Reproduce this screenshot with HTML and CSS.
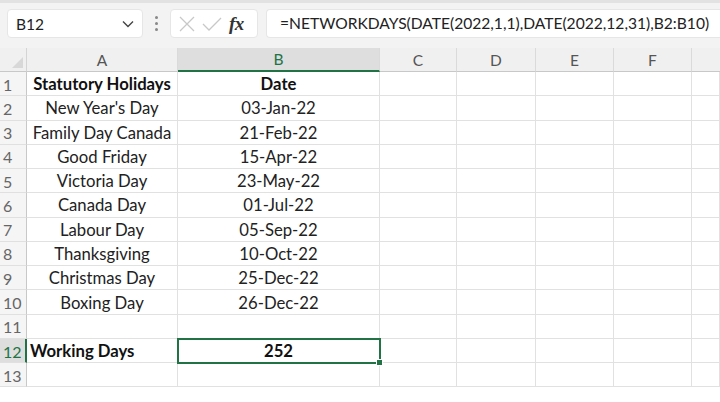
FILE: index.html
```html
<!DOCTYPE html>
<html>
<head>
<meta charset="utf-8">
<link rel="stylesheet" href="styles.css">
</head>
<body>
<div class="app">
  <div class="toolbar">
    <div class="namebox"><span class="ref">B12</span>
      <svg class="chev" width="12" height="8" viewBox="0 0 12 8"><path d="M1 1.5 L6 6.5 L11 1.5" fill="none" stroke="#444" stroke-width="1.4"/></svg>
    </div>
    <div class="vdots"><i></i><i></i><i></i></div>
    <div class="fnbox">
      <svg width="18" height="18" viewBox="0 0 18 18"><path d="M2 2 L16 16 M16 2 L2 16" stroke="#c8c8c8" stroke-width="1.3" fill="none"/></svg>
      <svg width="20" height="16" viewBox="0 0 20 16"><path d="M1 8 L7 14 L19 2" stroke="#c8c8c8" stroke-width="1.3" fill="none"/></svg>
      <span class="fx">fx</span>
    </div>
    <div class="formula">=NETWORKDAYS(DATE(2022,1,1),DATE(2022,12,31),B2:B10)</div>
  </div>
  <div class="grid">
    <div class="corner"><span class="tri"></span></div>
    <div class="ch">A</div><div class="ch sel">B</div><div class="ch">C</div><div class="ch">D</div><div class="ch">E</div><div class="ch">F</div><div class="ch last"></div>

    <div class="rh">1</div><div class="c b">Statutory Holidays</div><div class="c b">Date</div><div class="c"></div><div class="c"></div><div class="c"></div><div class="c"></div><div class="c"></div>
    <div class="rh">2</div><div class="c">New Year's Day</div><div class="c">03-Jan-22</div><div class="c"></div><div class="c"></div><div class="c"></div><div class="c"></div><div class="c"></div>
    <div class="rh">3</div><div class="c">Family Day Canada</div><div class="c">21-Feb-22</div><div class="c"></div><div class="c"></div><div class="c"></div><div class="c"></div><div class="c"></div>
    <div class="rh">4</div><div class="c">Good Friday</div><div class="c">15-Apr-22</div><div class="c"></div><div class="c"></div><div class="c"></div><div class="c"></div><div class="c"></div>
    <div class="rh">5</div><div class="c">Victoria Day</div><div class="c">23-May-22</div><div class="c"></div><div class="c"></div><div class="c"></div><div class="c"></div><div class="c"></div>
    <div class="rh">6</div><div class="c">Canada Day</div><div class="c">01-Jul-22</div><div class="c"></div><div class="c"></div><div class="c"></div><div class="c"></div><div class="c"></div>
    <div class="rh">7</div><div class="c">Labour Day</div><div class="c">05-Sep-22</div><div class="c"></div><div class="c"></div><div class="c"></div><div class="c"></div><div class="c"></div>
    <div class="rh">8</div><div class="c">Thanksgiving</div><div class="c">10-Oct-22</div><div class="c"></div><div class="c"></div><div class="c"></div><div class="c"></div><div class="c"></div>
    <div class="rh">9</div><div class="c">Christmas Day</div><div class="c">25-Dec-22</div><div class="c"></div><div class="c"></div><div class="c"></div><div class="c"></div><div class="c"></div>
    <div class="rh">10</div><div class="c">Boxing Day</div><div class="c">26-Dec-22</div><div class="c"></div><div class="c"></div><div class="c"></div><div class="c"></div><div class="c"></div>
    <div class="rh">11</div><div class="c"></div><div class="c"></div><div class="c"></div><div class="c"></div><div class="c"></div><div class="c"></div><div class="c"></div>
    <div class="rh sel">12</div><div class="c b left">Working Days</div><div class="c b active">252<span class="handle"></span></div><div class="c"></div><div class="c"></div><div class="c"></div><div class="c"></div><div class="c"></div>
    <div class="rh">13</div><div class="c"></div><div class="c"></div><div class="c"></div><div class="c"></div><div class="c"></div><div class="c"></div><div class="c"></div>
  </div>
</div>
</body>
</html>
```

FILE: styles.css
```css
html, body { margin: 0; padding: 0; background: #fff; }
body { width: 720px; height: 402px; overflow: hidden; font-family: Lato, "Open Sans", sans-serif; color: #222; }
.app { width: 720px; }
.toolbar {
  height: 45px;
  background: #f3f3f3;
  border-top: 3px solid #e2e2e2;
  display: flex;
  align-items: center;
  padding-left: 7px;
  box-sizing: content-box;
}
.namebox {
  width: 136px; height: 29px; box-sizing: border-box;
  background: #fff; border: 1px solid #e6e6e6; border-radius: 4px;
  display: flex; align-items: center; justify-content: space-between;
  padding: 0 8px 0 8px; margin-top: -4px;
}
.ref { font-size: 15.5px; color: #222; }
.chev { margin-top: 1px; }
.vdots { width: 27px; display: flex; flex-direction: column; align-items: center; gap: 3px; margin-top: -4px; }
.vdots i { width: 3px; height: 3px; border-radius: 50%; background: #888; display: block; }
.fnbox {
  width: 88px; height: 29px; box-sizing: border-box; margin-top: -4px;
  background: #fff; border: 1px solid #e6e6e6; border-radius: 4px;
  display: flex; align-items: center; gap: 6px; padding: 0 6px 0 7px;
}
.fx { font-family: "Liberation Serif", serif; font-style: italic; font-weight: 700; font-size: 19px; color: #333; margin-left: 1px; letter-spacing: -0.5px; }
.formula {
  margin-left: 8px; flex: 1; height: 29px; box-sizing: border-box; margin-top: -4px;
  background: #fff; border: 1px solid #e6e6e6; border-right: none; border-radius: 4px 0 0 4px;
  font-size: 15.6px; line-height: 27px; padding-left: 13px; white-space: nowrap; color: #222;
}
.grid {
  display: grid;
  grid-template-columns: 27px 151px 202px 77px 79px 78px 78px 28px;
  grid-template-rows: 24px repeat(13, 24.27px);
}
.corner { background: #f0f0f0; border-right: 1px solid #d4d4d4; border-bottom: 1px solid #c8c8c8; position: relative; }
.tri { position: absolute; right: 3px; bottom: 3px; width: 0; height: 0; border-left: 11px solid transparent; border-bottom: 11px solid #d8d8d8; }
.ch {
  background: #f0f0f0; border-right: 1px solid #dadada; border-bottom: 1px solid #c8c8c8;
  font-size: 15.5px; color: #555; display: flex; align-items: center; justify-content: center;
}
.ch.sel { background: #dedede; color: #217346; border-bottom: 2px solid #217346; }
.ch.last { border-right: none; }
.rh {
  background: #f5f5f5; border-right: 1px solid #c8c8c8; border-bottom: 1px solid #e0e0e0;
  font-size: 16px; color: #666; display: flex; align-items: center; padding-left: 3px; padding-top: 1px;
}
.rh.sel { background: #dedede; color: #217346; border-right: 2px solid #217346; }
.c {
  border-right: 1px solid #e1e1e1; border-bottom: 1px solid #e1e1e1;
  font-size: 16.7px; color: #222; display: flex; align-items: center; justify-content: center;
  white-space: nowrap; overflow: visible; position: relative; padding-top: 1px;
}
.c.b { font-weight: 700; color: #111; }
.c.left { justify-content: flex-start; padding-left: 3px; }
.c.active { outline: 2px solid #217346; outline-offset: -1px; z-index: 2; }
.handle { position: absolute; right: -4px; bottom: -4px; width: 5px; height: 5px; background: #217346; border: 1px solid #fff; }
```
